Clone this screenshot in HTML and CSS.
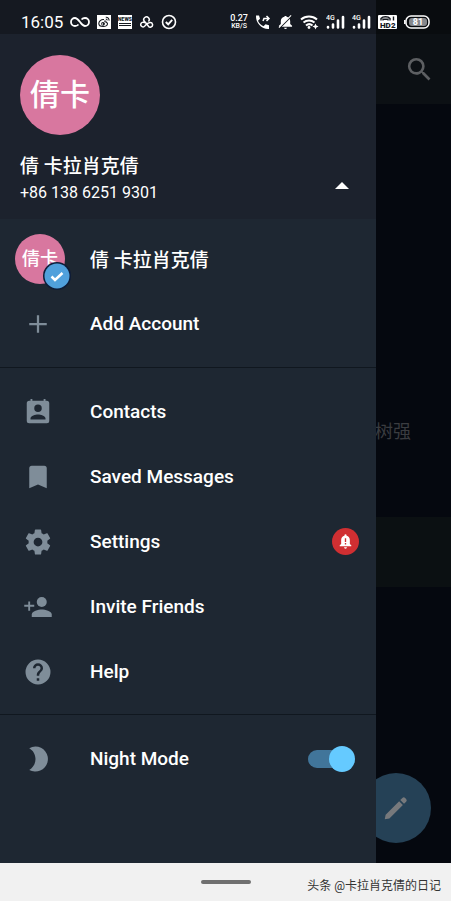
FILE: index.html
```html
<!DOCTYPE html>
<html lang="en">
<head>
<meta charset="utf-8">
<meta name="viewport" content="width=device-width, initial-scale=1">
<title>Menu</title>
<link rel="stylesheet" href="styles.css">
</head>
<body>
<main class="chats">
  <div class="chats-bar">
    <button class="icon-button" aria-label="Search">
      <svg class="search-icon" viewBox="0 0 24 24"><path d="M15.5 14h-.79l-.28-.27A6.47 6.47 0 0 0 16 9.500 6.500 6.500 0 1 0 9.500 16c1.610 0 3.090-.59 4.230-1.570l.27.28v.79l5 4.990L20.490 19zm-6 0a4.500 4.500 0 1 1 0-9 4.500 4.500 0 0 1 0 9z"/></svg>
    </button>
  </div>
  <p class="chat-name" lang="zh">树强</p>
  <div class="chat-row"></div>
  <button class="compose" aria-label="New message">
    <svg viewBox="0 0 24 24"><path d="M3 21l.7-3.700L14.500 6.500l3 3L6.700 20.300zM15.400 5.600l1.700-1.700a1.600 1.600 0 0 1 2.200 0l.8.8a1.600 1.600 0 0 1 0 2.200l-1.700 1.700z"/></svg>
  </button>
</main>

<aside class="drawer">
  <header class="profile">
    <div class="avatar avatar-large" lang="zh">倩卡</div>
    <div class="profile-line">
      <div>
        <div class="profile-name" lang="zh">倩 卡拉肖克倩</div>
        <div class="profile-phone">+86 138 6251 9301</div>
      </div>
      <button class="icon-button expand" aria-label="Hide accounts">
        <svg viewBox="0 0 14 7"><path d="M0 7l7-7 7 7z"/></svg>
      </button>
    </div>
  </header>

  <nav>
    <div class="group accounts">
      <a class="row" href="#account">
        <span class="avatar avatar-small" lang="zh">倩卡
          <svg class="selected" viewBox="0 0 28 28"><circle cx="14" cy="14" r="14" fill="#0e1c38"/><circle cx="14" cy="14" r="12.500" fill="#50a0dc"/><path d="M8.500 14.500l3.500 3.500 7.500-7" fill="none" stroke="#fff" stroke-width="2.500"/></svg>
        </span>
        <span lang="zh">倩 卡拉肖克倩</span>
      </a>
      <a class="row" href="#add">
        <svg class="icon" viewBox="0 0 24 24"><path d="M19 12.900h-6.100V19h-1.800v-6.100H5v-1.800h6.100V5h1.800v6.100H19z"/></svg>
        <span>Add Account</span>
      </a>
    </div>
    <div class="group">
      <a class="row" href="#contacts">
        <svg class="icon" viewBox="0 0 24 24"><path d="M19 3h-1V1.500h-1.500V3h-9V1.500H6V3H5a2 2 0 0 0-2 2v14a2 2 0 0 0 2 2h14a2 2 0 0 0 2-2V5a2 2 0 0 0-2-2zm-7 3a3 3 0 1 1 0 6 3 3 0 0 1 0-6zm6 12H6v-1c0-2 4-3.100 6-3.100s6 1.100 6 3.100z"/></svg>
        <span>Contacts</span>
      </a>
      <a class="row" href="#saved">
        <svg class="icon" viewBox="0 0 24 24"><path d="M17 3H7a2 2 0 0 0-2 2v16l7-3 7 3V5a2 2 0 0 0-2-2z"/></svg>
        <span>Saved Messages</span>
      </a>
      <a class="row" href="#settings">
        <svg class="icon" viewBox="0 0 24 24"><path d="M19.430 12.980c.04-.32.07-.64.07-.98s-.03-.66-.07-.98l2.110-1.650c.19-.15.24-.42.12-.64l-2-3.460c-.12-.22-.39-.3-.61-.22l-2.490 1c-.52-.4-1.080-.73-1.690-.98l-.38-2.650A.49.49 0 0 0 14 2h-4c-.25 0-.46.18-.49.42l-.38 2.650c-.61.25-1.170.59-1.690.98l-2.490-1c-.23-.09-.49 0-.61.22l-2 3.460c-.13.22-.07.49.12.64l2.110 1.650c-.04.32-.07.65-.07.98s.03.66.07.98l-2.110 1.650c-.19.15-.24.42-.12.64l2 3.460c.12.22.39.3.61.22l2.490-1c.52.4 1.080.73 1.690.98l.38 2.650c.03.24.24.42.49.42h4c.25 0 .46-.18.49-.42l.38-2.650c.61-.25 1.170-.59 1.690-.98l2.490 1c.23.09.49 0 .61-.22l2-3.460c.12-.22.07-.49-.12-.64zM12 15.500a3.500 3.500 0 1 1 0-7 3.500 3.500 0 0 1 0 7z"/></svg>
        <span>Settings</span>
        <svg class="alert" viewBox="0 0 28 28"><circle cx="14" cy="14" r="14" fill="#d02f32"/><path fill="#fff" d="M8 19v-1l1.500-1.500V12.500c0-2.300 1.300-4 3.400-4.500V7.500a1.100 1.100 0 0 1 2.200 0V8c2.100.5 3.400 2.200 3.400 4.500v4L20 18v1zM12.500 20h3a1.500 1.500 0 0 1-3 0z"/><path fill="#d02f32" d="M13.300 10.500h1.400v4h-1.400zM13.300 15.500h1.400V17h-1.400z"/></svg>
      </a>
      <a class="row" href="#invite">
        <svg class="icon" viewBox="0 0 24 24"><circle cx="15" cy="8" r="4"/><path d="M15 14c-2.700 0-8 1.300-8 4v2h16v-2c0-2.700-5.300-4-8-4z"/><path d="M5.700 10.200V7.500H4.200v2.700H1v1.600h3.200v3.200h1.500v-3.200H9v-1.600z"/></svg>
        <span>Invite Friends</span>
      </a>
      <a class="row" href="#help">
        <svg class="icon" viewBox="0 0 24 24"><path d="M12 2a10 10 0 1 0 0 20 10 10 0 0 0 0-20zm1 17h-2v-2h2zm2.070-7.750l-.9.92C13.450 12.900 13 13.500 13 15h-2v-.5c0-1.100.45-2.100 1.170-2.830l1.240-1.260c.37-.36.59-.86.59-1.410a2 2 0 1 0-4 0H8a4 4 0 1 1 8 0c0 .88-.36 1.680-.93 2.250z"/></svg>
        <span>Help</span>
      </a>
    </div>
    <div class="group">
      <label class="row">
        <svg class="icon" viewBox="0 0 24 24"><path d="M10 2a10 10 0 1 1-5 18.700C8 19 10 15.800 10 12S8 5 5 3.300A10 10 0 0 1 10 2z"/></svg>
        <span>Night Mode</span>
        <input class="switch" type="checkbox" role="switch" checked>
      </label>
    </div>
  </nav>
</aside>

<div class="status">
  <div class="status-side">
    <span class="clock">16:05</span>
    <svg width="20" height="14" viewBox="0 0 20 14"><path d="M11.500 4.500C12.500 3.400 13.500 3 15 3a4 4 0 0 1 0 8c-2 0-3-1.500-5-4S7 3 5 3a4 4 0 0 0 0 8c1.500 0 2.500-.4 3.500-1.500" fill="none" stroke="#fff" stroke-width="1.800"/></svg>
    <svg width="14" height="14" viewBox="0 0 14 14"><path fill="#fff" d="M0 0h14v14H0z"/><path fill="none" stroke="#15191f" stroke-width="1.100" d="M7 4.500C4 4 1.800 6.500 1.800 8.500c0 4 8.700 4 8.700.3 0-1-.8-1.300-1.500-1.500.3-1.200-.3-1.600-2-1M8.800 2.200a3 3 0 0 1 3.200 3.500M8.800 4a1.300 1.300 0 0 1 1.300 1.400"/><circle cx="6" cy="8.800" r="1.900" fill="#15191f"/><circle cx="5.400" cy="9" r=".7" fill="#fff"/></svg>
    <svg width="14" height="14" viewBox="0 0 14 14"><path fill="#fff" d="M0 0h14v14H0z"/><text x="7" y="6" class="news" text-anchor="middle">NEWS</text><path stroke="#15191f" d="M1 8.500h12M1 10.500h12"/></svg>
    <svg width="15" height="14" viewBox="0 0 16 14"><g fill="none" stroke="#fff" stroke-width="1.600"><path d="M10 6.500a2.900 2.900 0 1 0-4.300-.3c1.500 1.800 2.800 2.800 4 4.800a2.500 2.500 0 1 0 2-3.500c-2.700.3-3.500 1.500-5.200 3.500a2.500 2.500 0 1 1-3-3.600c1.500-.4 3 .2 4 .8"/></g></svg>
    <svg width="16" height="16" viewBox="0 0 16 16"><g fill="none" stroke="#fff" stroke-width="1.600"><circle cx="8" cy="8" r="6.500"/><path stroke-width="1.900" d="M4.800 8l2.400 2.300 4-4.500"/></g></svg>
  </div>
  <div class="status-side">
    <span class="speed"><span class="rate">0.27</span><span>KB/S</span></span>
    <svg width="16" height="16" viewBox="0 0 16 16"><path fill="#fff" d="M1 1.500h3l1 3.300-2 2c1 2.500 3 4.500 5.500 5.500l2-2 3.500 1V15C7 15.500 .5 9 1 1.500z"/><path d="M8 7l1-2.500h5M11.500 2L14 4.500 11.500 7" fill="none" stroke="#fff" stroke-width="1.500"/></svg>
    <svg width="15" height="16" viewBox="0 0 16 16"><path fill="#fff" d="M1 13v-1l2-2V7c0-2.500 1.500-4.200 4-4.700V1.500h2v.8c2.500.5 4 2.200 4 4.700v3l2 2v1zM6.500 14h3a1.500 1.500 0 0 1-3 0z"/><path stroke="#15191f" stroke-width="1.500" d="M1 15.200L15 1.200"/><path stroke="#fff" stroke-width="1.200" d="M1 14L14 1"/></svg>
    <svg width="19" height="16" viewBox="0 0 19 16"><g fill="none" stroke="#fff" stroke-width="2"><path d="M1 5.500a12 12 0 0 1 16 0M3.500 8.500a8.500 8.500 0 0 1 11 0M6 11.500a5 5 0 0 1 6.500 0"/></g><circle cx="9" cy="13.500" r="1.400" fill="#fff"/><path fill="#fff" d="M15.500 9.500l.9 2.100 2.100.9-2.100.9-.9 2.100-.9-2.100-2.100-.9 2.100-.9z"/></svg>
    <svg width="19" height="14" viewBox="0 0 19 14"><text x="0" y="5" class="network">4G</text><path stroke="#fff" stroke-width="2.600" stroke-linecap="round" d="M2 12v.5M7 9.500v3M12 5.500v7M17 2v10.500"/></svg>
    <svg width="19" height="14" viewBox="0 0 19 14"><text x="0" y="5" class="network">4G</text><path stroke="#fff" stroke-width="2.600" stroke-linecap="round" d="M2 12v.5M7 9.500v3M12 5.500v7M17 2v10.500"/></svg>
    <svg width="19" height="14" viewBox="0 0 19 14"><rect width="19" height="14" rx="1" fill="#fff"/><path fill="none" stroke="#15191f" stroke-width="1.400" d="M3 5.500v-2a5 3 0 0 1 9 0v2M5 5.500V4.200h5v1.300M15.500 1.500v4"/><text x="2" y="13" class="hd">HD</text><text x="13" y="13" class="hd">2</text></svg>
    <svg width="26" height="14" viewBox="0 0 26 14"><rect x="2" y="1" width="23" height="12" rx="5" fill="none" stroke="#fff" stroke-width="1.500"/><path stroke="#fff" stroke-width="1.500" d="M.8 5v4"/><rect x="5" y="3" width="18" height="8" rx="3" fill="#85888c"/><text x="14" y="10" class="charge" text-anchor="middle">81</text></svg>
  </div>
</div>

<footer class="system-nav">
  <span></span>
  <span class="home-bar"></span>
  <span class="signature" lang="zh">头条 @卡拉肖克倩的日记</span>
</footer>
</body>
</html>
```

FILE: styles.css
```css
* {
  box-sizing: border-box;
}

body {
  margin: 0;
  min-height: 100vh;
  display: grid;
  grid-template-columns: minmax(0, 1fr);
  grid-template-rows: 34px 1fr 38px;
  background: #05080f;
  color: #fff;
  font-family: Roboto, "Noto Sans CJK SC", sans-serif;
}

button {
  padding: 0;
  border: 0;
  background: none;
}

svg {
  display: block;
  flex: none;
}

/* System status bar */
.status {
  grid-area: 1 / 1;
  z-index: 2;
  display: flex;
  justify-content: space-between;
  padding: 10px 21px 0;
  background: rgba(0, 0, 0, 0.25);
}

.status-side {
  display: flex;
  align-items: center;
  gap: 7px;
  height: 24px;
}

.clock {
  font-size: 17px;
}

.speed {
  display: grid;
  font-size: 7px;
  font-weight: 500;
  line-height: 8px;
  text-align: center;
}

.rate {
  font-size: 9px;
}

.news {
  font-size: 5px;
  font-weight: 900;
  fill: #15191f;
}

.network {
  font-size: 7px;
  font-weight: 500;
  fill: #fff;
}

.hd {
  font-size: 8px;
  font-weight: 900;
  fill: #15191f;
}

.charge {
  font-size: 9px;
  font-weight: 700;
  fill: #fff;
}

/* Dimmed chat list behind the drawer */
.chats {
  grid-area: 1 / 1 / 3 / 2;
  position: relative;
  display: flex;
  flex-direction: column;
}

.chats-bar {
  display: flex;
  justify-content: flex-end;
  height: 104px;
  padding: 34px 16px 0;
  background: #0c1014;
}

.icon-button {
  display: flex;
  align-items: center;
}

.search-icon {
  width: 31px;
  fill: #5d5f62;
}

.chat-name {
  margin: 314px 40px 0;
  font-size: 18px;
  line-height: 28px;
  text-align: right;
  color: #3a3c40;
}

.chat-row {
  height: 70px;
  margin-top: 71px;
  background: #0b1012;
}

.compose {
  position: absolute;
  right: 20px;
  bottom: 20px;
  width: 70px;
  height: 70px;
  display: grid;
  place-items: center;
  border-radius: 50%;
  background: #254156;
}

.compose svg {
  width: 30px;
  fill: #77797c;
}

/* Drawer */
.drawer {
  grid-area: 1 / 1 / 3 / 2;
  z-index: 1;
  margin-right: 75px;
  background: #1e2732;
}

.profile {
  height: 219px;
  padding: 55px 20px 0;
  background: #1c222d;
}

.avatar {
  display: grid;
  place-items: center;
  border-radius: 50%;
  background: #d8779f;
  font-weight: 500;
}

.avatar-large {
  width: 80px;
  height: 80px;
  padding-bottom: 6px;
  font-size: 30px;
}

.avatar-small {
  position: relative;
  width: 50px;
  height: 50px;
  padding-bottom: 4px;
  font-size: 18px;
}

.selected {
  position: absolute;
  right: -6px;
  bottom: -6px;
  width: 28px;
}

.profile-line {
  display: flex;
  justify-content: space-between;
  align-items: center;
  margin-top: 18px;
}

.profile-name {
  font-size: 19px;
  font-weight: 500;
  line-height: 28px;
}

.profile-phone {
  font-size: 16px;
  line-height: 24px;
}

.expand {
  padding: 12px 7px 0;
}

.expand svg {
  width: 14px;
  fill: #fff;
}

.group {
  padding: 11px 0 10px;
  border-top: 1px solid #10171f;
}

.accounts {
  padding: 7px 0 11px;
  border-top: 0;
}

.row {
  display: grid;
  grid-template-columns: 75px 1fr auto;
  align-items: center;
  height: 65px;
  padding: 0 17px 0 15px;
  color: #fff;
  font-size: 19px;
  font-weight: 500;
  text-decoration: none;
}

.icon {
  width: 30px;
  margin-left: 8px;
  fill: #7f8d99;
}

.alert {
  width: 27px;
}

.switch {
  appearance: none;
  position: relative;
  width: 44px;
  height: 18px;
  margin: 0 7px 0 0;
  border-radius: 9px;
  background: #41759a;
}

.switch::before {
  content: "";
  position: absolute;
  top: -4px;
  right: -3px;
  width: 26px;
  height: 26px;
  border-radius: 50%;
  background: #65caff;
}

/* System navigation bar */
.system-nav {
  grid-area: 3 / 1;
  display: grid;
  grid-template-columns: 1fr 50px 1fr;
  align-items: center;
  background: #f1f1f1;
}

.home-bar {
  height: 4px;
  border-radius: 2px;
  background: #707070;
}

.signature {
  justify-self: end;
  margin: 4px 10px 0 0;
  color: #333;
  font-size: 12px;
  white-space: nowrap;
}
```
